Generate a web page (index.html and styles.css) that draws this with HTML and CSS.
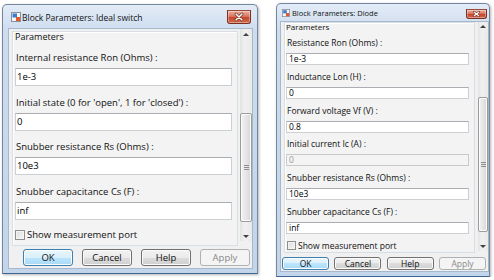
FILE: index.html
```html
<!DOCTYPE html>
<html lang="en">
<head>
    <meta charset="UTF-8">
    <title>Block Parameters</title>
    <link rel="stylesheet" href="styles.css">
</head>
<body>
    <div class="desk">
        <!-- Ideal switch dialog -->
        <div class="dlg dlg-lg">
            <div class="titlebar">
                <svg class="app-icon" viewBox="0 0 10 10">
                    <rect x="0.5" y="0.5" width="9" height="9" fill="#f6f6f6" stroke="#8a8f99"/>
                    <rect x="1.5" y="1.5" width="4.5" height="4" fill="#3d7cc9"/>
                    <rect x="5" y="5" width="4" height="4" fill="#e25a2c"/>
                </svg>
                <span class="title">Block Parameters: Ideal switch</span>
                <span class="close">
                    <svg viewBox="0 0 24 14">
                        <path d="M8.5 3.5 L15.5 10.5 M15.5 3.5 L8.5 10.5" stroke="#5a1d12" stroke-width="3.2" stroke-linecap="round"/>
                        <path d="M8.5 3.5 L15.5 10.5 M15.5 3.5 L8.5 10.5" stroke="#ffffff" stroke-width="1.8" stroke-linecap="round"/>
                    </svg>
                </span>
            </div>
            <div class="client">
                <div class="scroll">
                    <div class="panel">
                        <div class="legend">Parameters</div>
                        <div class="field">
                            <div class="label">Internal resistance Ron (Ohms) :</div>
                            <div class="input">1e-3</div>
                        </div>
                        <div class="field">
                            <div class="label">Initial state (0 for 'open', 1 for 'closed') :</div>
                            <div class="input">0</div>
                        </div>
                        <div class="field">
                            <div class="label">Snubber resistance Rs (Ohms) :</div>
                            <div class="input">10e3</div>
                        </div>
                        <div class="field">
                            <div class="label">Snubber capacitance Cs (F) :</div>
                            <div class="input">inf</div>
                        </div>
                        <div class="check"><span class="box"></span>Show measurement port</div>
                    </div>
                    <div class="vscroll">
                        <span class="arrow up"></span>
                        <span class="thumb"><span class="grip"></span></span>
                        <span class="arrow down"></span>
                    </div>
                </div>
                <div class="buttons">
                    <button class="btn btn-default">OK</button>
                    <button class="btn">Cancel</button>
                    <button class="btn">Help</button>
                    <button class="btn" disabled>Apply</button>
                </div>
            </div>
        </div>

        <!-- Diode dialog -->
        <div class="dlg dlg-sm">
            <div class="titlebar">
                <svg class="app-icon" viewBox="0 0 10 10">
                    <rect x="0.5" y="0.5" width="9" height="9" fill="#f6f6f6" stroke="#8a8f99"/>
                    <rect x="1.5" y="1.5" width="4.5" height="4" fill="#3d7cc9"/>
                    <rect x="5" y="5" width="4" height="4" fill="#e25a2c"/>
                </svg>
                <span class="title">Block Parameters: Diode</span>
                <span class="close">
                    <svg viewBox="0 0 21 10">
                        <path d="M7.5 2.5 L13.5 7.5 M13.5 2.5 L7.5 7.5" stroke="#5a1d12" stroke-width="2.8" stroke-linecap="round"/>
                        <path d="M7.5 2.5 L13.5 7.5 M13.5 2.5 L7.5 7.5" stroke="#ffffff" stroke-width="1.4" stroke-linecap="round"/>
                    </svg>
                </span>
            </div>
            <div class="client">
                <div class="scroll">
                    <div class="panel">
                        <div class="legend">Parameters</div>
                        <div class="field">
                            <div class="label">Resistance Ron (Ohms) :</div>
                            <div class="input">1e-3</div>
                        </div>
                        <div class="field">
                            <div class="label">Inductance Lon (H) :</div>
                            <div class="input">0</div>
                        </div>
                        <div class="field">
                            <div class="label">Forward voltage Vf (V) :</div>
                            <div class="input">0.8</div>
                        </div>
                        <div class="field">
                            <div class="label">Initial current Ic (A) :</div>
                            <div class="input input-off">0</div>
                        </div>
                        <div class="field">
                            <div class="label">Snubber resistance Rs (Ohms) :</div>
                            <div class="input">10e3</div>
                        </div>
                        <div class="field">
                            <div class="label">Snubber capacitance Cs (F) :</div>
                            <div class="input">inf</div>
                        </div>
                        <div class="check"><span class="box"></span>Show measurement port</div>
                    </div>
                    <div class="vscroll">
                        <span class="arrow up"></span>
                        <span class="thumb"><span class="grip"></span></span>
                        <span class="arrow down"></span>
                    </div>
                </div>
                <div class="buttons">
                    <button class="btn btn-default">OK</button>
                    <button class="btn">Cancel</button>
                    <button class="btn">Help</button>
                    <button class="btn" disabled>Apply</button>
                </div>
            </div>
        </div>
    </div>
</body>
</html>
```

FILE: styles.css
```css
* {
    box-sizing: border-box;
    margin: 0;
    padding: 0;
}
body {
    background: #ffffff;
    font-family: "Open Sans", "Noto Sans", sans-serif;
    color: #111111;
}
.desk {
    display: flex;
    align-items: flex-start;
    gap: 18px;
    padding: 3px 0 0 2px;
}

/* window frame */
.dlg {
    display: flex;
    flex-direction: column;
    border: 1px solid #74879e;
    border-bottom-color: #3d6591;
    border-radius: 5px 5px 0 0;
    background: linear-gradient(#e3ecf7, #cddcee 26px, #c3d5ea);
    box-shadow: 1px 1px 3px rgba(0, 0, 0, 0.3);
}
.titlebar {
    display: flex;
    align-items: center;
    flex-shrink: 0;
}
.app-icon {
    flex-shrink: 0;
}
.title {
    color: #111111;
    white-space: nowrap;
}
.close {
    display: block;
    margin-left: auto;
    align-self: flex-start;
    border: 1px solid #7b2f22;
    border-top-color: #9a4a3b;
    border-radius: 0 0 3px 3px;
    background: linear-gradient(#eab1a2, #d9745d 45%, #c6452b 55%, #d46c4f);
    box-shadow: inset 0 0 0 1px rgba(255, 255, 255, 0.35);
}
.close svg {
    display: block;
    width: 100%;
    height: 100%;
}
.client {
    display: flex;
    flex-direction: column;
    flex: 1;
    background: #f0f0f0;
    box-shadow: 0 0 0 1px #a7b8cc;
}
.scroll {
    display: flex;
    align-items: flex-start;
    flex-shrink: 0;
}
.panel {
    border: 1px solid #d5dfe5;
    box-shadow: inset 1px 1px 0 #ffffff;
    background: #f3f3f3;
    overflow: hidden;
}
.legend {
    white-space: nowrap;
}
.label {
    white-space: nowrap;
}
.input {
    background: #ffffff;
    border: 1px solid #cdcfd3;
    border-top-color: #abadb3;
    color: #000000;
    white-space: nowrap;
}
.input-off {
    background: #f4f4f4;
    border-color: #c9c9c9;
    color: #9a9a9a;
}
.check {
    display: flex;
    align-items: center;
    white-space: nowrap;
}
.box {
    display: block;
    border: 1px solid #8e8f8f;
    background: linear-gradient(135deg, #dcdcdc, #f6f6f6);
    box-shadow: inset 0 0 0 1px #f4f4f4;
}

/* scrollbar */
.vscroll {
    display: flex;
    flex-direction: column;
    align-items: stretch;
    background: linear-gradient(90deg, #e3e3e3, #f0f0f0 40%, #eaeaea);
}
.arrow {
    display: flex;
    justify-content: center;
    align-items: center;
}
.arrow::after {
    content: "";
    border-left: 3px solid transparent;
    border-right: 3px solid transparent;
}
.arrow.up::after {
    border-bottom: 3px solid #404040;
}
.arrow.down {
    margin-top: auto;
}
.arrow.down::after {
    border-top: 3px solid #404040;
}
.thumb {
    display: flex;
    justify-content: center;
    align-items: center;
    border: 1px solid #9b9b9b;
    border-radius: 2px;
    background: linear-gradient(90deg, #f2f2f2, #e6e6e6 50%, #d6d6d6);
    box-shadow: inset 0 0 0 1px #fbfbfb;
}
.grip {
    display: block;
    width: 5px;
    height: 5px;
    background: repeating-linear-gradient(#8d8d8d 0 1px, transparent 1px 2px);
}

/* buttons */
.buttons {
    display: flex;
    justify-content: flex-end;
}
.btn {
    font-family: "Open Sans", "Noto Sans", sans-serif;
    color: #111111;
    border: 1px solid #707070;
    border-radius: 3px;
    background: linear-gradient(#f2f2f2, #ebebeb 50%, #dddddd 50%, #cfcfcf);
    box-shadow: inset 0 0 0 1px #fbfbfb;
}
.btn-default {
    border-color: #3c7fb1;
    background: linear-gradient(#eaf6fd, #d9f0fc 50%, #bee6fd 50%, #a7d9f5);
}
.btn:disabled {
    border-color: #adb2b5;
    background: #f4f4f4;
    color: #8a8a8a;
    box-shadow: none;
}

/* large dialog (Ideal switch) */
.dlg-lg {
    width: 256px;
    height: 270px;
    margin-top: 1px;
}
.dlg-lg .titlebar {
    height: 24px;
    padding: 0 6px 0 8px;
}
.dlg-lg .app-icon {
    width: 10px;
    height: 10px;
}
.dlg-lg .title {
    margin-left: 1px;
    font-size: 8.5px;
}
.dlg-lg .close {
    width: 24px;
    height: 14px;
    margin-top: 5px;
}
.dlg-lg .client {
    margin: 0 5px 5px 6px;
}
.dlg-lg .scroll {
    height: 218px;
}
.dlg-lg .panel {
    width: 226px;
    height: 215px;
    margin: 2px 0 0 3px;
    padding-left: 2px;
}
.dlg-lg .legend {
    font-size: 9px;
    line-height: 10px;
    margin-bottom: 8px;
}
.dlg-lg .field {
    margin-bottom: 8.5px;
}
.dlg-lg .label {
    font-size: 9.5px;
    line-height: 16px;
    padding-left: 1px;
}
.dlg-lg .input {
    width: 217px;
    height: 18px;
    margin-top: 2px;
    padding-left: 1px;
    font-size: 9.5px;
    line-height: 16px;
}
.dlg-lg .check {
    font-size: 9.5px;
    line-height: 16px;
    margin-top: -1px;
}
.dlg-lg .box {
    width: 10px;
    height: 10px;
    margin-right: 2px;
}
.dlg-lg .vscroll {
    width: 12px;
    height: 212px;
    margin-left: 2px;
}
.dlg-lg .arrow {
    height: 10px;
}
.dlg-lg .thumb {
    height: 109px;
    margin-top: 74px;
}
.dlg-lg .buttons {
    gap: 9px;
    height: 17px;
    margin-top: 2px;
    padding-right: 2px;
}
.dlg-lg .btn {
    width: 50px;
    font-size: 9.5px;
}

/* small dialog (Diode) */
.dlg-sm {
    width: 214px;
    height: 274px;
}
.dlg-sm .titlebar {
    height: 18px;
    padding: 0 2px 0 5px;
}
.dlg-sm .app-icon {
    width: 8px;
    height: 8px;
}
.dlg-sm .title {
    margin-left: 2px;
    font-size: 7.5px;
}
.dlg-sm .close {
    width: 21px;
    height: 10px;
    margin-top: 5px;
}
.dlg-sm .client {
    margin: 0 1px 5px 4px;
}
.dlg-sm .scroll {
    height: 233px;
}
.dlg-sm .panel {
    width: 191px;
    height: 231px;
    margin-left: 3px;
    padding-left: 1px;
}
.dlg-sm .legend {
    font-size: 8px;
    line-height: 8px;
    margin-bottom: 6px;
}
.dlg-sm .field {
    margin-bottom: 5.8px;
}
.dlg-sm .label {
    font-size: 8.5px;
    line-height: 12px;
    padding-left: 1px;
}
.dlg-sm .input {
    width: 183px;
    height: 12px;
    margin-top: 4px;
    padding-left: 2px;
    font-size: 8.5px;
    line-height: 10px;
}
.dlg-sm .check {
    font-size: 8.5px;
    line-height: 12px;
}
.dlg-sm .box {
    width: 9px;
    height: 9px;
    margin: 0 2px 0 1px;
}
.dlg-sm .vscroll {
    width: 10px;
    height: 229px;
    margin-left: 3px;
}
.dlg-sm .arrow {
    height: 9px;
}
.dlg-sm .thumb {
    height: 135px;
    margin-top: 66px;
}
.dlg-sm .buttons {
    gap: 5.3px;
    height: 13px;
    margin-top: 2px;
    padding-right: 2px;
}
.dlg-sm .btn {
    width: 47px;
    font-size: 8.5px;
    line-height: 10px;
}
```
